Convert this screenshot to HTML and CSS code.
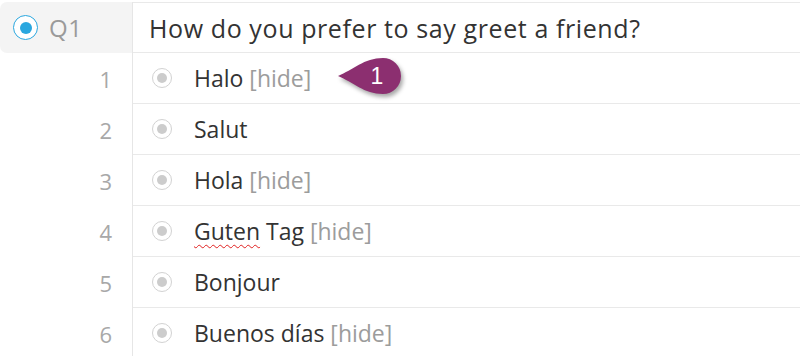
FILE: index.html
```html
<!DOCTYPE html>
<html>
<head>
<meta charset="utf-8">
<link rel="stylesheet" href="styles.css">
</head>
<body>
<div class="sheet">
  <div class="row head">
    <div class="num qcell">
      <span class="radio big"><span class="dot"></span></span>
      <span class="qlabel">Q1</span>
    </div>
    <div class="body qtext">How do you prefer to say greet a friend?</div>
  </div>
  <div class="row">
    <div class="num">1</div>
    <div class="body"><span class="radio"><span class="dot"></span></span><span class="label">Halo <span class="hide">[hide]</span></span>
      <span class="badge">
        <svg class="pin" width="72" height="48" viewBox="0 0 72 48"><path d="M2 22 C 17 16 28 4 47 4 A 18 18 0 1 1 47 40 C 28 40 17 28 2 22 Z" fill="#8c2f70"/></svg>
        <span class="badge-num">1</span>
      </span>
    </div>
  </div>
  <div class="row">
    <div class="num">2</div>
    <div class="body"><span class="radio"><span class="dot"></span></span><span class="label">Salut</span></div>
  </div>
  <div class="row">
    <div class="num">3</div>
    <div class="body"><span class="radio"><span class="dot"></span></span><span class="label">Hola <span class="hide">[hide]</span></span></div>
  </div>
  <div class="row">
    <div class="num">4</div>
    <div class="body"><span class="radio"><span class="dot"></span></span><span class="label"><span class="spell">Guten</span> Tag <span class="hide">[hide]</span></span></div>
  </div>
  <div class="row">
    <div class="num">5</div>
    <div class="body"><span class="radio"><span class="dot"></span></span><span class="label">Bonjour</span></div>
  </div>
  <div class="row">
    <div class="num">6</div>
    <div class="body"><span class="radio"><span class="dot"></span></span><span class="label">Buenos días <span class="hide">[hide]</span></span></div>
  </div>
</div>
</body>
</html>
```
FILE: styles.css
```css
html, body {
  margin: 0;
  padding: 0;
  background: #ffffff;
}
body {
  font-family: "Open Sans", "Noto Sans", sans-serif;
  color: #333333;
  width: 800px;
  height: 356px;
  overflow: hidden;
}
.sheet {
  padding-top: 2px;
}
.row {
  display: flex;
  height: 51px;
}
.num {
  width: 133px;
  flex: none;
  border-right: 1px solid #e6e6e6;
  display: flex;
  align-items: center;
  justify-content: flex-end;
  padding-right: 20px;
  box-sizing: border-box;
  font-size: 22px;
  color: #a8a8a8;
}
.body {
  flex: 1;
  display: flex;
  align-items: center;
  border-bottom: 1px solid #e9e9e9;
  box-sizing: border-box;
  padding-left: 19px;
  position: relative;
}
.head .body {
  border-top: 1px solid #e9e9e9;
}
.qcell {
  background: #f4f4f4;
  border-radius: 7px 0 0 7px;
  justify-content: flex-start;
  padding-left: 13px;
  padding-right: 0;
}
.qlabel {
  font-size: 24px;
  color: #9a9a9a;
  margin-left: 11px;
  letter-spacing: 0.5px;
}
.qtext {
  font-size: 25px;
  letter-spacing: 0.6px;
  color: #333333;
  padding-left: 16px;
}
.radio {
  box-sizing: border-box;
  width: 20px;
  height: 20px;
  border-radius: 50%;
  border: 1.5px solid #d2d2d2;
  background: #ffffff;
  display: flex;
  align-items: center;
  justify-content: center;
  flex: none;
}
.radio .dot {
  width: 10px;
  height: 10px;
  border-radius: 50%;
  background: #cccccc;
}
.radio.big {
  width: 25px;
  height: 25px;
  border-color: #2aa7df;
}
.radio.big .dot {
  width: 12px;
  height: 12px;
  background: #2aa7df;
}
.label {
  font-size: 23px;
  margin-left: 22px;
  color: #333333;
}
.hide {
  color: #9c9c9c;
}
.spell {
  text-decoration: underline wavy #e02020;
  text-decoration-thickness: 1px;
  text-underline-offset: 4px;
}
.badge {
  position: absolute;
  left: 203px;
  top: 1px;
  width: 72px;
  height: 48px;
}
.pin {
  display: block;
  filter: drop-shadow(2px 3px 2px rgba(0, 0, 0, 0.35));
}
.badge-num {
  position: absolute;
  left: 32px;
  top: 8px;
  width: 18px;
  text-align: center;
  color: #ffffff;
  font-family: "Liberation Sans", Arial, sans-serif;
  font-size: 23px;
  line-height: 28px;
}
```
